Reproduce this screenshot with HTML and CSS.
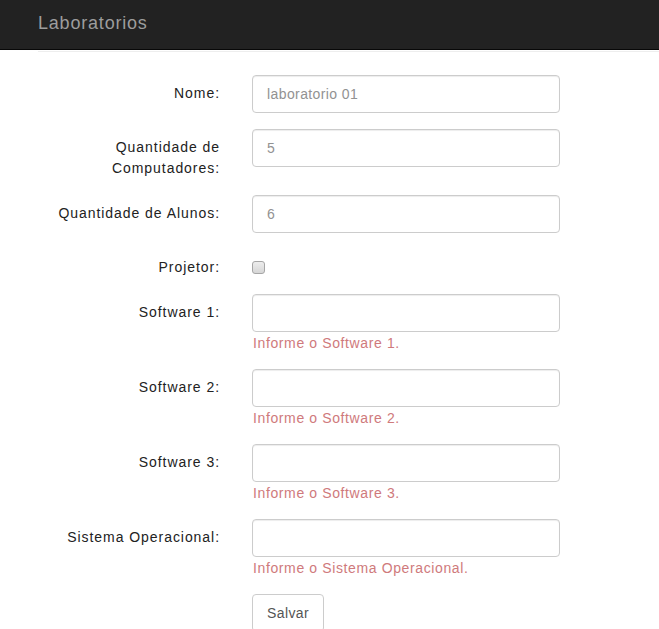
FILE: index.html
```html
<!DOCTYPE html>
<html lang="pt">
<head>
<meta charset="utf-8">
<title>Laboratorios</title>
<link rel="stylesheet" href="styles.css">
</head>
<body>
<nav class="navbar"><span class="brand">Laboratorios</span></nav>
<div class="divider"></div>
<form class="form">
  <div class="group">
    <label class="label">Nome:</label>
    <div class="field"><input class="input" type="text" value="laboratorio 01"></div>
  </div>
  <div class="group">
    <label class="label">Quantidade de Computadores:</label>
    <div class="field"><input class="input" type="text" value="5"></div>
  </div>
  <div class="group">
    <label class="label">Quantidade de Alunos:</label>
    <div class="field"><input class="input" type="text" value="6"></div>
  </div>
  <div class="group">
    <label class="label">Projetor:</label>
    <div class="field check-field"><input class="check" type="checkbox"></div>
  </div>
  <div class="group">
    <label class="label">Software 1:</label>
    <div class="field"><input class="input" type="text"><span class="help">Informe o Software 1.</span></div>
  </div>
  <div class="group">
    <label class="label">Software 2:</label>
    <div class="field"><input class="input" type="text"><span class="help">Informe o Software 2.</span></div>
  </div>
  <div class="group">
    <label class="label">Software 3:</label>
    <div class="field"><input class="input" type="text"><span class="help">Informe o Software 3.</span></div>
  </div>
  <div class="group">
    <label class="label">Sistema Operacional:</label>
    <div class="field"><input class="input" type="text"><span class="help">Informe o Sistema Operacional.</span></div>
  </div>
  <div class="group">
    <span class="label"></span>
    <div class="field"><button class="btn" type="button">Salvar</button></div>
  </div>
</form>
</body>
</html>
```
FILE: styles.css
```css
html, body {
  margin: 0;
  padding: 0;
  background: #fff;
}
body {
  font-family: "Liberation Sans", Arial, Helvetica, sans-serif;
  font-size: 14px;
  color: #333;
  line-height: 21px;
}
.navbar {
  height: 49px;
  background: #222;
  border-bottom: 1px solid #080808;
  display: flex;
  align-items: center;
  padding-left: 38px;
  box-sizing: content-box;
}
.brand {
  font-size: 18px;
  color: #9d9d9d;
  line-height: 20px;
  margin-top: -4px;
  letter-spacing: 0.8px;
}
.divider {
  margin-top: 1px;
  margin-left: 38px;
  border-top: 1px solid #eee;
}
.form {
  padding-top: 23px;
  display: flex;
  flex-direction: column;
  gap: 16px;
}
.group {
  display: flex;
  column-gap: 32px;
  padding-left: 37px;
}
.label {
  width: 183px;
  flex: none;
  text-align: right;
  padding-top: 8px;
  line-height: 21px;
  color: #222;
  letter-spacing: 0.95px;
}
.field {
  width: 308px;
  display: flex;
  flex-direction: column;
}
.input {
  box-sizing: border-box;
  width: 308px;
  height: 38px;
  border: 1px solid #ccc;
  border-radius: 4px;
  padding: 0 14px;
  font-family: inherit;
  font-size: 14px;
  letter-spacing: 0.4px;
  color: #929292;
  background: #fff;
  box-shadow: inset 0 1px 1px rgba(0,0,0,.075);
  outline: none;
}
.check-field {
  padding-top: 12px;
}
.check {
  appearance: none;
  -webkit-appearance: none;
  margin: 0;
  width: 13px;
  height: 13px;
  border: 1px solid #a6a6a6;
  border-radius: 3px;
  background: linear-gradient(#ededed, #d6d6d6);
  box-sizing: border-box;
}
.help {
  margin-top: 1px;
  margin-left: 1px;
  line-height: 20px;
  color: #cf7a7c;
  letter-spacing: 0.62px;
}
.btn {
  align-self: flex-start;
  height: 38px;
  padding: 0 14px;
  border: 1px solid #ccc;
  border-radius: 4px;
  background: #fff;
  font-family: inherit;
  font-size: 14px;
  letter-spacing: 0.4px;
  color: #555;
}
```
